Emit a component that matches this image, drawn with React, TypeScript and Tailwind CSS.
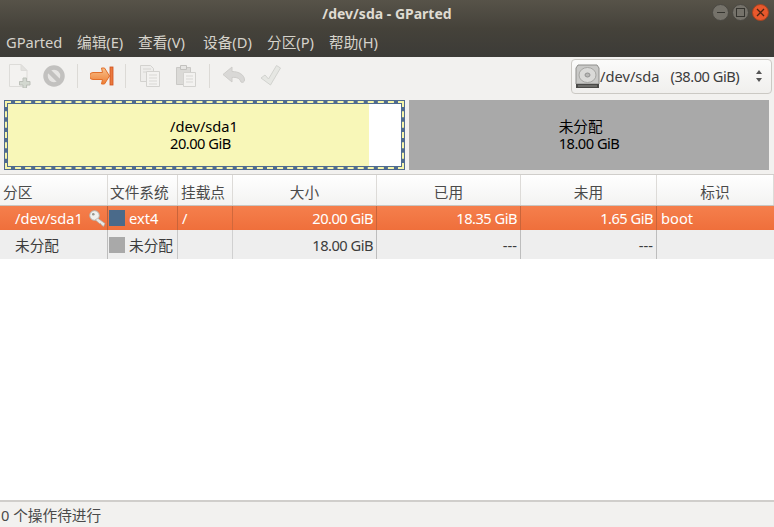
const sans = "font-['Noto_Sans','Noto_Sans_CJK_SC',sans-serif]";
// digits run wider than the original's font, pull size strings in a little
const num = "tracking-[-0.5px]";

function NewIcon() {
  return (
    <svg width="24" height="24" viewBox="0 0 24 24">
      <path d="M1.500 .5H13l6 6v16H1.500z" fill="#f3f2f0" stroke="#dddcd9" />
      <path d="M13 .5V6.500H19z" fill="#e3e2df" stroke="#dddcd9" />
      <path d="M15 14h3.500v3.500H22V21h-3.500v3H15v-3h-3.500v-3.500H15z" fill="#d3d8d0" stroke="#bcc0b9" />
    </svg>
  );
}

function DeleteIcon() {
  return (
    <svg width="24" height="24" viewBox="0 0 24 24">
      <circle cx="12" cy="12" r="8.500" fill="#e6e5e3" stroke="#c2c1bf" strokeWidth="4.500" />
      <path d="M6 6l12 12" stroke="#c2c1bf" strokeWidth="4.500" />
    </svg>
  );
}

function ResizeIcon() {
  return (
    <svg width="24" height="20" viewBox="0 0 24 20">
      <defs>
        <linearGradient id="arrow" x1="0" y1="0" x2="0" y2="1">
          <stop offset="0" stopColor="#f8c08a" />
          <stop offset="1" stopColor="#ee7f35" />
        </linearGradient>
      </defs>
      <path d="M3 6.500h9.500l-1-4.500h3l5 8-5 8h-3l1-4.500H3a3.500 3.500 0 0 1 0-7z" fill="url(#arrow)" stroke="#e2702c" />
      <rect x="20" y="1" width="3" height="18" fill="#ea7a3e" stroke="#d2501c" strokeWidth="0.800" />
    </svg>
  );
}

function CopyIcon() {
  return (
    <svg width="22" height="24" viewBox="0 0 22 24">
      <path d="M1.500 1.500h10l3 3v13h-13z" fill="#eeedeb" stroke="#d3d2cf" />
      <path d="M4 5h8M4 8h3" stroke="#d6d5d2" />
      <path d="M7.500 7.500h13v15h-13z" fill="#f3f2f0" stroke="#d3d2cf" />
      <path d="M10 11h8M10 14h8M10 17h8M10 20h8" stroke="#d9d8d5" />
    </svg>
  );
}

function PasteIcon() {
  return (
    <svg width="22" height="24" viewBox="0 0 22 24">
      <path d="M1.500 3.500h14v17h-14z" fill="#dbdad7" stroke="#cac9c6" />
      <path d="M5.500 1.500h6v4h-6z" fill="#e6e5e3" stroke="#c2c1be" />
      <path d="M8.500 8.500h12v14h-12z" fill="#f3f2f0" stroke="#d3d2cf" />
      <path d="M11 12h7M11 15h7M11 18h7" stroke="#d9d8d5" />
    </svg>
  );
}

function UndoIcon() {
  return (
    <svg width="24" height="20" viewBox="0 0 24 20">
      <path d="M10 1 1 8.500l9 7.500v-4.500c4.500-.5 7.500.5 9 4.500 1.500 1 3.500 0 3.500-2 0-5-5.500-8.500-12.500-8.500z" fill="#d9d8d6" stroke="#cecdca" />
    </svg>
  );
}

function ApplyIcon() {
  return (
    <svg width="22" height="24" viewBox="0 0 22 24">
      <path d="M1 14l4-3 3.500 4L16.500 1.500l4 2.500-10 17z" fill="#e6e7e3" stroke="#d2d3cf" />
    </svg>
  );
}

function DiskIcon() {
  return (
    <svg width="25" height="25" viewBox="0 0 25 25">
      <path d="M3 1h19l2 3v16H1V4z" fill="#c9c9c7" stroke="#8f8f8c" />
      <ellipse cx="12.500" cy="11" rx="8.500" ry="7.500" fill="#dadad8" stroke="#a6a6a3" />
      <ellipse cx="12.500" cy="11" rx="2.500" ry="2" fill="#b8b8b6" stroke="#919190" />
      <rect x="1" y="20" width="23" height="4" fill="#4a4a48" />
      <rect x="3" y="21.500" width="19" height="1" fill="#8d8d8a" />
    </svg>
  );
}

function KeyIcon() {
  return (
    <svg width="17" height="17" viewBox="0 0 17 17">
      <circle cx="5.500" cy="5.500" r="4.800" fill="#f0f0ee" stroke="#b4b4b0" />
      <circle cx="4.300" cy="4.300" r="1.300" fill="#97978f" />
      <path d="M8.500 8 16 13.500 14.500 16.500 12.500 15 11.500 13.500 10.500 13.500 6.500 10z" fill="#e8e8e5" stroke="#aeaeaa" strokeWidth="0.700" />
    </svg>
  );
}

function ToolSep() {
  return <div className="ml-[11px] mr-[12px] h-6 w-px bg-[#dcdad6]" />;
}

const menus = [
  { label: "GParted", width: "w-[71px]" },
  { label: "编辑(E)", width: "w-[61px]" },
  { label: "查看(V)", width: "w-[65px]" },
  { label: "设备(D)", width: "w-[64px]" },
  { label: "分区(P)", width: "w-[62px]" },
  { label: "帮助(H)", width: "w-[60px]" },
];

const columns = [
  { label: "分区", align: "pl-[3px]" },
  { label: "文件系统", align: "pl-[2px]" },
  { label: "挂载点", align: "pl-[3px]" },
  { label: "大小", align: "justify-center" },
  { label: "已用", align: "justify-center" },
  { label: "未用", align: "justify-center" },
  { label: "标识", align: "justify-center" },
];

const gridCols = "grid grid-cols-[108px_70px_55px_144px_144px_136px_117px]";

export default function App() {
  return (
    <div className={`${sans} flex h-[527px] w-[774px] flex-col overflow-hidden bg-white text-[14.67px] text-[#3c3c3c]`}>
      {/* title + menu share the dark gradient */}
      <div className="relative h-[57px] shrink-0 bg-gradient-to-b from-[#575349] via-[#45423a] to-[#3c3b37]">
        <div className="flex h-[27px] items-center justify-center text-[14px] font-bold text-[#dfdbd2]">/dev/sda - GParted</div>
        <div className="absolute right-[5px] top-[4px] flex gap-[3px]">
          <div className="flex h-[17px] w-[17px] items-center justify-center rounded-full border border-[#4a4842] bg-[#75726a]">
            <div className="h-px w-[8px] bg-[#35342f]" />
          </div>
          <div className="flex h-[17px] w-[17px] items-center justify-center rounded-full border border-[#4a4842] bg-[#75726a]">
            <div className="h-[9px] w-[9px] border border-[#35342f]" />
          </div>
          <div className="flex h-[17px] w-[17px] items-center justify-center rounded-full border border-[#a8431f] bg-[#e9582c]">
            <svg width="9" height="9" viewBox="0 0 9 9">
              <path d="M1 1l7 7M8 1l-7 7" stroke="#4a2412" strokeWidth="1.300" />
            </svg>
          </div>
        </div>
        <div className="flex h-[30px] items-center pl-[6px] text-[#d6d3cb]">
          {menus.map((m) => (
            <span key={m.label} className={`${m.width} whitespace-nowrap`}>{m.label}</span>
          ))}
        </div>
      </div>

      {/* toolbar */}
      <div className="flex h-[38px] shrink-0 items-center bg-[#f2f1ef] pl-[8px]">
        <div className="flex w-[24px] justify-center"><NewIcon /></div>
        <div className="ml-[10px] flex w-[24px] justify-center"><DeleteIcon /></div>
        <ToolSep />
        <div className="flex w-[24px] justify-center"><ResizeIcon /></div>
        <ToolSep />
        <div className="flex w-[24px] justify-center"><CopyIcon /></div>
        <div className="ml-[12px] flex w-[24px] justify-center"><PasteIcon /></div>
        <ToolSep />
        <div className="flex w-[24px] justify-center"><UndoIcon /></div>
        <div className="ml-[13px] flex w-[24px] justify-center"><ApplyIcon /></div>
        <div className="ml-auto mr-[2px] flex h-[35px] w-[201px] items-center rounded-[4px] border border-[#cbc9c4] bg-gradient-to-b from-[#fbfbfa] to-[#f0efed] pl-[3px] pr-[9px] text-[#3c3c3c]">
          <DiskIcon />
          <span className="whitespace-pre">/dev/sda</span>
          <span className={`${num} ml-[11px] whitespace-pre`}>(38.00 GiB)</span>
          <div className="ml-auto flex flex-col gap-[4px]">
            <div className="h-0 w-0 border-x-[3px] border-b-[4px] border-x-transparent border-b-[#555]" />
            <div className="h-0 w-0 border-x-[3px] border-t-[4px] border-x-transparent border-t-[#555]" />
          </div>
        </div>
      </div>

      {/* partition map */}
      <div className="flex h-[80px] shrink-0 gap-[4px] border-b border-[#d0cecb] bg-[#f2f1ef] pl-[4px] pt-[5px]">
        <div className="h-[70px] w-[401px] bg-[#4f6b8f] p-px">
          <div className="h-full border-2 border-dashed border-[#f6f5a8]">
            <div className="flex h-full border border-[#4f6b8f] leading-[17px] text-black">
              <div className="flex w-[361px] flex-col items-start justify-center bg-[#f8f7b8] pl-[162px]">
                <div>/dev/sda1</div>
                <div className={num}>20.00 GiB</div>
              </div>
              <div className="flex-1 bg-white" />
            </div>
          </div>
        </div>
        <div className="flex h-[70px] w-[360px] items-center justify-center bg-[#a9a9a9] leading-[17px] text-black">
          <div>
            <div>未分配</div>
            <div className={num}>18.00 GiB</div>
          </div>
        </div>
      </div>

      {/* partition table */}
      <div className={`${gridCols} h-[31px] shrink-0 border-b border-[#c8c6c2] bg-gradient-to-b from-[#ffffff] to-[#f3f3f2] text-[#4a4a4a]`}>
        {columns.map((c) => (
          <div key={c.label} className={`flex items-center border-r border-[#dddbd8] pt-[3px] ${c.align}`}>
            {c.label}
          </div>
        ))}
      </div>

      <div className={`${gridCols} h-[24px] shrink-0 items-stretch bg-gradient-to-b from-[#f57f4c] to-[#ef6f3b] text-white`}>
        <div className="flex items-center justify-between border-r border-[#b8623c] pl-[15px] pr-[1px]">
          <span>/dev/sda1</span>
          <KeyIcon />
        </div>
        <div className="flex items-center border-r border-[#c9643a] pl-[1px]">
          <div className="h-4 w-4 bg-[#4a6a8a]" />
          <span className="ml-[4px]">ext4</span>
        </div>
        <div className="flex items-center border-r border-[#d0683c] pl-[4px]">/</div>
        <div className={`${num} flex items-center justify-end border-r border-[#c9643a] pr-[3px]`}>20.00 GiB</div>
        <div className={`${num} flex items-center justify-end border-r border-[#c9643a] pr-[3px]`}>18.35 GiB</div>
        <div className={`${num} flex items-center justify-end border-r border-[#c9643a] pr-[3px]`}>1.65 GiB</div>
        <div className="flex items-center pl-[4px]">boot</div>
      </div>

      <div className={`${gridCols} h-[29px] shrink-0 items-stretch bg-[#eeeeee] text-[#3c3c3c]`}>
        <div className="flex items-center border-r border-[#bdbdbd] pl-[15px]">未分配</div>
        <div className="flex items-center border-r border-[#c8c8c8] pl-[1px]">
          <div className="h-4 w-4 bg-[#a9a9a9]" />
          <span className="ml-[4px]">未分配</span>
        </div>
        <div className="border-r border-[#d0d0d0]" />
        <div className={`${num} flex items-center justify-end border-r border-[#bdbdbd] pr-[3px]`}>18.00 GiB</div>
        <div className="flex items-center justify-end border-r border-[#bdbdbd] pr-[3px]">---</div>
        <div className="flex items-center justify-end border-r border-[#bdbdbd] pr-[3px]">---</div>
        <div />
      </div>

      <div className="flex-1 bg-white" />

      {/* status bar */}
      <div className="flex h-[27px] shrink-0 items-center border-t-2 border-[#d0cecb] bg-[#f2f1ef] pl-[1px] pt-[1px] text-[#4a4a4a]">
        0 个操作待进行
      </div>
    </div>
  );
}
